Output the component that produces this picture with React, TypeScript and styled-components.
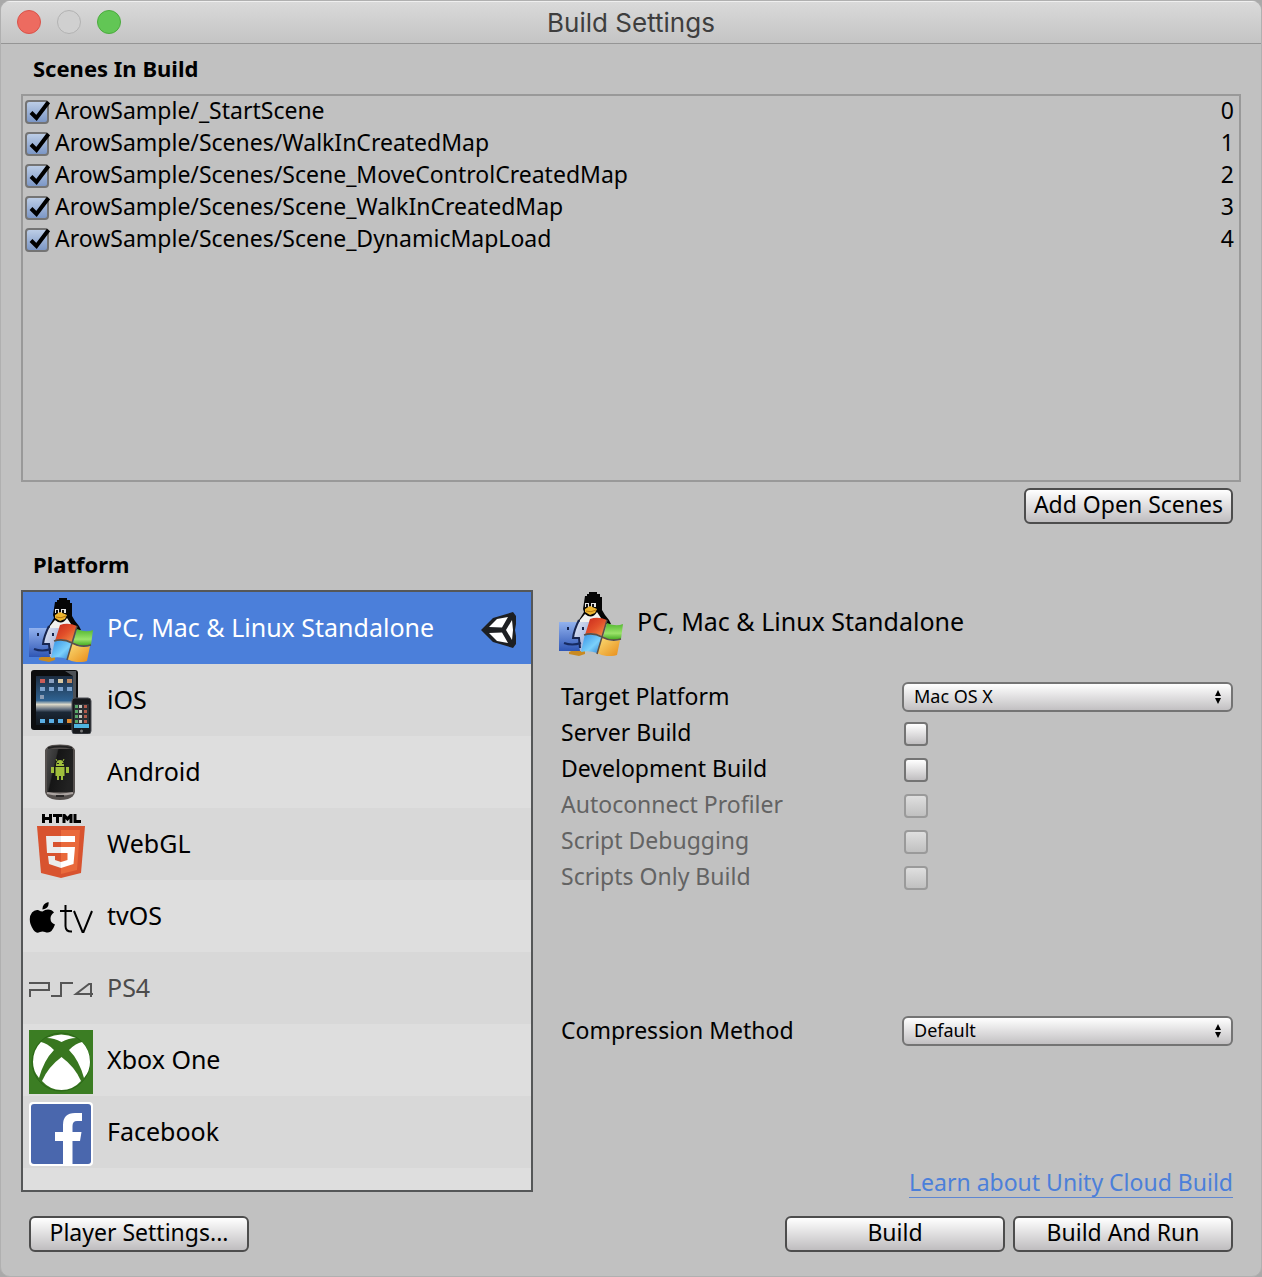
import React from "react";
import styled, { createGlobalStyle, css } from "styled-components";

const GlobalStyle = createGlobalStyle`
  *, *::before, *::after { box-sizing: border-box; }
  html { background: #a9a9a9; }
  body {
    margin: 0;
    font-family: "Noto Sans", "Open Sans", sans-serif;
    font-size: 23px;
    line-height: 32px;
    color: #000;
  }
  button, select, input { font: inherit; color: inherit; margin: 0; }
`;

const Window = styled.div`
  display: flex;
  flex-direction: column;
  min-height: 100vh;
  background: #c1c1c1;
  border: 1px solid #b0b0b0;
  border-radius: 10px;
  overflow: hidden;
`;

const TitleBar = styled.header`
  display: grid;
  grid-template-columns: 1fr auto 1fr;
  align-items: center;
  height: 43px;
  padding: 0 16px;
  background: linear-gradient(#dadada, #c4c4c4);
  border-bottom: 1px solid #959595;
  box-shadow: inset 0 1px #efefef;
`;

const TrafficLights = styled.div`
  display: flex;
  gap: 16px;
`;

const Light = styled.button<{ $fill: string; $edge: string }>`
  width: 24px;
  height: 24px;
  padding: 0;
  border: 1px solid ${(p) => p.$edge};
  border-radius: 50%;
  background: ${(p) => p.$fill};
`;

const WindowTitle = styled.h1`
  margin: 0;
  padding-top: 2px;
  font: 400 26px/32px Inter, Roboto, sans-serif;
  color: #3e3e3e;
`;

const Content = styled.main`
  display: flex;
  flex-direction: column;
  flex: 1;
  padding: 8px 20px 24px;
`;

const SectionTitle = styled.h2`
  margin: 0;
  padding: 0 12px;
  font-size: 22px;
  line-height: 32px;
  font-weight: 700;
`;

const SceneList = styled.ul`
  list-style: none;
  height: 388px;
  margin: 10px 0 6px;
  padding: 0 5px 0 2px;
  border: 2px solid #999;
`;

const SceneRow = styled.li`
  display: flex;
  justify-content: space-between;
  line-height: 28px;
  height: 32px;
`;

const SceneLabel = styled.label`
  display: flex;
  gap: 6px;
`;

const SceneCheck = styled.span`
  padding-top: 4px;
`;

const CheckBoxFrame = styled.span`
  position: relative;
  display: flex;
  width: 24px;
  height: 24px;
`;

const CheckMark = styled.svg`
  position: absolute;
  inset: 0;
  overflow: visible;
  pointer-events: none;
`;

const CheckBoxInput = styled.input`
  appearance: none;
  width: 24px;
  height: 24px;
  border: 2px solid #747474;
  border-radius: 4px;
  background: linear-gradient(#fff, #c0bec0);
  &:checked { background: linear-gradient(#bccde6, #7c97c6); }
  &:disabled { border-color: #9a9a9a; background: linear-gradient(#dfdfdf, #c0c0c0); }
`;

const PushButton = styled.button<{ $wide?: boolean }>`
  height: 36px;
  padding: 0 8px 4px;
  border: 2px solid #4d4d4d;
  border-radius: 6px;
  background: linear-gradient(#fff, #bfbdbf);
  line-height: 28px;
  ${(p) => p.$wide && css`width: 220px;`}
`;

const ButtonRow = styled.div<{ $align: string }>`
  display: flex;
  gap: 8px;
  padding: 0 8px;
  justify-content: ${(p) => p.$align};
`;

const PlatformArea = styled.section`
  display: grid;
  grid-template-columns: 512px minmax(0, 1fr);
  gap: 26px;
  margin: 10px 0 24px;
`;

const PlatformHeading = styled(SectionTitle)`
  margin-top: 24px;
`;

const PlatformList = styled.ul`
  list-style: none;
  height: 602px;
  margin: 0;
  padding: 0;
  border: 2px solid #555758;
  background: #dedede;
`;

const PlatformRow = styled.li<{ $active?: boolean }>`
  display: flex;
  height: 72px;
  background: #dedede;
  &:nth-child(even) { background: #d8d8d8; }
  ${(p) => p.$active && css`background: #4b7fda; color: #fff;`}
`;

const PlatformButton = styled.button<{ $dim?: boolean }>`
  display: flex;
  align-items: center;
  gap: 14px;
  flex: 1;
  padding: 4px 12px 0 6px;
  border: 0;
  background: none;
  text-align: left;
  font-size: 25px;
  ${(p) => p.$dim && css`color: #4c4c4c;`}
`;

const PlatformName = styled.span`
  flex: 1;
  padding-bottom: 6px;
`;

const Details = styled.div`
  display: flex;
  flex-direction: column;
  padding: 2px 8px 0 0;
`;

const DetailsHeader = styled.div`
  display: flex;
  align-items: center;
  gap: 14px;
  margin-bottom: 23px;
`;

const DetailsTitle = styled.h3`
  margin: 0;
  padding-bottom: 6px;
  font-size: 25px;
  line-height: 32px;
  font-weight: 400;
`;

const Field = styled.div<{ $dim?: boolean; $gapBefore?: boolean }>`
  display: grid;
  grid-template-columns: 341px minmax(0, 1fr);
  align-items: center;
  height: 36px;
  padding-left: 2px;
  ${(p) => p.$dim && css`color: #636363;`}
  ${(p) => p.$gapBefore && css`margin-top: 118px;`}
`;

const FieldLabel = styled.label`
  padding-bottom: 2px;
`;

const FieldCheck = styled.span`
  display: flex;
  padding: 2px 0 0 2px;
`;

const SelectFrame = styled.span`
  position: relative;
  display: flex;
`;

const SelectBox = styled.select`
  appearance: none;
  width: 100%;
  height: 30px;
  padding: 0 32px 2px 10px;
  border: 2px solid #747474;
  border-radius: 6px;
  background: linear-gradient(#fff, #c2c0c2);
  font-size: 18px;
  line-height: 24px;
`;

const SelectArrows = styled.svg`
  position: absolute;
  right: 12px;
  top: 8px;
  pointer-events: none;
`;

const LearnLink = styled.a`
  margin-top: auto;
  margin-bottom: -6px;
  align-self: flex-end;
  border-bottom: 1px solid #5f87d2;
  color: #4b7fda;
  line-height: 30px;
  text-decoration: none;
`;

const Spread = styled.div`
  display: flex;
  justify-content: space-between;
`;

function CheckBox({ id, checked, disabled }: { id: string; checked?: boolean; disabled?: boolean }) {
  return (
    <CheckBoxFrame>
      <CheckBoxInput id={id} type="checkbox" defaultChecked={checked} disabled={disabled} />
      {checked && (
        <CheckMark width="24" height="24" viewBox="0 0 24 24" aria-hidden="true">
          <path d="M6 12.500 L11.500 18 L23.500 2" fill="none" stroke="#000" strokeWidth="4" />
        </CheckMark>
      )}
    </CheckBoxFrame>
  );
}

function Icon({ children }: { children: React.ReactNode }) {
  return <svg width="64" height="64" viewBox="0 0 64 64" aria-hidden="true">{children}</svg>;
}

function StandaloneIcon({ id }: { id: string }) {
  return (
    <Icon>
      <defs>
        <linearGradient id={id + "m"} x2="0" y2="1"><stop stopColor="#92b2ee" /><stop offset="1" stopColor="#2f56b5" /></linearGradient>
        <linearGradient id={id + "f"} x2="1" y2="1"><stop stopColor="#e4e8f4" /><stop offset="1" stopColor="#8fa4d6" /></linearGradient>
        <linearGradient id={id + "r"} x2="1" y2="1"><stop stopColor="#c8281c" /><stop offset=".5" stopColor="#e2502a" /><stop offset="1" stopColor="#f39a4c" /></linearGradient>
        <linearGradient id={id + "g"} x2="0" y2="1"><stop stopColor="#4fb52e" /><stop offset=".6" stopColor="#9be36a" /><stop offset="1" stopColor="#3da61c" /></linearGradient>
        <linearGradient id={id + "b"} x2="1" y2="1"><stop stopColor="#2f8de4" /><stop offset=".6" stopColor="#7bd0fb" /><stop offset="1" stopColor="#2f7fd0" /></linearGradient>
        <linearGradient id={id + "y"} x2="1" y2="1"><stop stopColor="#fbe07a" /><stop offset="1" stopColor="#e88c18" /></linearGradient>
      </defs>
      <path d="M26 4 H28 V2 H30 V0 H38 V2 H41 V5 H43 V18 L46 23 L50 28 L52 32 H20 V28 L25 20 L24 17 Z" fill="#050505" />
      <path d="M26 22 Q33 28 38 20 L42 26 L40 35 H19 L21 28 Z" fill="#f1f1ef" />
      <path d="M26 11 H30 V15 H26 Z M32 11 H37 V15 H32 Z" fill="#e4e4e4" />
      <path d="M27 12 H29 V15 H27 Z M33 12 H35 V15 H33 Z" fill="#111" />
      <path d="M26 17 L31 14 L38 17 L36 21 L31 23 L26 20 Z" fill="#edb52f" />
      <path d="M27 19 Q32 21 37 18" stroke="#b87812" fill="none" />
      <path d="M10 60 L17 57 L26 58 V62 L20 64 L10 62 Z" fill="#c98a22" />
      <path d="M0 30 H19 Q15 38 14 46 H20 L21 59 H0 Z" fill={"url(#" + id + "m)"} />
      <path d="M19 30 H30 L25 59 H21 L20 46 H14 Q15 37 19 30 Z" fill={"url(#" + id + "f)"} />
      <path d="M20 28 Q15 38 14 46 H20 L21 56" fill="none" stroke="#17254f" strokeWidth="2" />
      <path d="M9 35 V38 M24 35 V38" stroke="#13224a" strokeWidth="2" />
      <path d="M5 51 Q13 54 22 51" stroke="#172b61" fill="none" strokeWidth="2" />
      <path d="M31 27 Q39 24 48 28 L43 44 Q34 40 26 43 Z" fill={"url(#" + id + "r)"} />
      <path d="M48 31 Q57 35 64 32 L62 47 Q53 50 44 45 Z" fill={"url(#" + id + "g)"} />
      <path d="M26 42 Q35 40 43 45 L38 61 Q30 58 22 60 Z" fill={"url(#" + id + "b)"} />
      <path d="M43 45 Q52 51 61 48 L58 63 Q47 66 38 61 Z" fill={"url(#" + id + "y)"} />
      <path d="M48 28 L38 62 M25 43 Q34 40 43 45 Q52 50 62 47" stroke="#5c5046" fill="none" strokeWidth="1.500" />
    </Icon>
  );
}

const APP_COLORS = ["#c95c58", "#8aa0c0", "#d9c9a4", "#bd8862"];

function IosIcon() {
  return (
    <Icon>
      <defs>
        <linearGradient id="ipad" x2="0" y2="1">
          <stop stopColor="#1c2c40" /><stop offset=".5" stopColor="#2f6291" /><stop offset=".58" stopColor="#dcd8c8" />
          <stop offset=".68" stopColor="#5f6c7c" /><stop offset=".74" stopColor="#1c2836" /><stop offset="1" stopColor="#101820" />
        </linearGradient>
      </defs>
      <rect x="2" y="0" width="47" height="60" rx="3" fill="#0c0d0f" />
      <path d="M36 1 H47 V28 H44 V6 Z" fill="#4d5156" />
      <rect x="7" y="6" width="37" height="49" fill="url(#ipad)" />
      {[0, 1, 2, 3].map((c) => (
        <g key={c}>
          <rect x={11 + c * 9} y="9" width="5" height="4" fill={APP_COLORS[c]} />
          <rect x={11 + c * 9} y="17" width="5" height="4" fill="#7da2cc" />
          <rect x={11 + c * 9} y="49" width="5" height="4" fill={c === 3 ? "#e08a30" : "#5aaee4"} />
        </g>
      ))}
      <rect x="11" y="25" width="4" height="4" fill="#8b9cb4" />
      <rect x="43" y="28" width="19" height="36" rx="3" fill="#17191c" stroke="#4c4f54" />
      <rect x="45" y="34" width="15" height="24" fill="#2b2f33" />
      {[0, 1, 2, 3].map((r) => (
        <g key={r}>
          <rect x="46" y={35 + r * 5} width="3" height="3" fill="#58a868" />
          <rect x="50" y={35 + r * 5} width="3" height="3" fill="#c4c4bc" />
          <rect x="55" y={35 + r * 5} width="3" height="3" fill="#b05b4c" />
        </g>
      ))}
      <path d="M45 54 H60 V58 H45 Z" fill="#4fb4df" />
      <circle cx="52.5" cy="61" r="1.5" fill="#777" />
    </Icon>
  );
}

function AndroidIcon() {
  return (
    <Icon>
      <defs><linearGradient id="phone" x2="1" y2=".4"><stop stopColor="#4a4a4a" /><stop offset=".35" stopColor="#343434" /><stop offset=".4" stopColor="#151515" /><stop offset="1" stopColor="#222" /></linearGradient></defs>
      <path d="M16 8 Q18 4 23 3 Q31 2 39 3 Q44 4 46 8 V50 Q45 55 39 57 Q31 59 23 57 Q17 55 16 50 Z" fill="#55504e" />
      <path d="M18 7 H44 V50 H18 Z" fill="url(#phone)" />
      <path d="M19 6 Q31 3 43 6" stroke="#222" strokeWidth="2" fill="none" />
      <path d="M18 51 Q31 54 44 51" stroke="#aaa3a0" strokeWidth="2" fill="none" />
      <path d="M27 54 H35" stroke="#282626" strokeWidth="2" />
      <g fill="#9fbd3c">
        <path d="M27 24 Q27 18 31 18 Q35 18 35 24 Z M26.500 25 H35.500 V34 H34 V38 H32 V34 H30 V38 H28 V34 H26.500 Z" />
        <path d="M22 25 H25 V31 H22 Z M37 25 H40 V31 H37 Z" />
        <path d="M27 17 L28 19 M35 17 L34 19" stroke="#9fbd3c" />
      </g>
      <path d="M28 21 H30 V22 H28 Z M33 21 H35 V22 H33 Z" fill="#202020" />
    </Icon>
  );
}

function Html5Icon() {
  return (
    <Icon>
      <path d="M14.500 0 V9 M21.500 0 V9 M14 4.500 H22 M24 1.500 H33 M28.500 0 V9 M35 9 V1 L38.500 5 L42 1 V9 M46 0 V7.500 H52" stroke="#000" strokeWidth="3" fill="none" />
      <path d="M8 12 H56 L52 59 L32 64 L12 59 Z" fill="#d8532f" />
      <path d="M32 16 H51 L48 56 L32 60 Z" fill="#e9693b" />
      <path d="M17 22 H32 V28 H24 V33 H32 V39 H18 Z M19 42 H26 V46 L32 48 V54 L20 50 Z" fill="#ebebeb" />
      <path d="M32 22 H46 V28 H32 Z M32 33 H46 L44.500 50 L32 54 V48 L38.500 46 V39 H32 Z" fill="#fff" />
    </Icon>
  );
}

function TvIcon() {
  return (
    <Icon>
      <path d="M13.500 23.500 Q13 18 19.500 16 Q20.500 22 13.500 23.500 Z M13.500 25.500 Q16 23.500 19 23.500 Q23 23.500 25 26.500 Q21.500 29 21.500 32.500 Q21.500 37 26 38.500 Q23 46.500 19 46.500 Q17 46.500 16 46 Q13.500 45 11 46 Q9 47 7.500 46.500 Q4 45 1.500 38 Q-0.500 31 3 26.500 Q5.500 23.500 9 24 Q12 25.500 13.500 25.500 Z" fill="#000" />
      <path d="M31 25 H43 M36.500 19 V40 Q36.500 46 43 45.500 M45 25 L53.500 46 H54.500 L63 25" fill="none" stroke="#000" strokeWidth="2" />
    </Icon>
  );
}

function Ps4Icon() {
  return (
    <Icon>
      <path d="M0 25 H20 V32 H1 V39" fill="none" stroke="#555" strokeWidth="2" />
      <path d="M22 38 H32 V25 H44" fill="none" stroke="#555" strokeWidth="2" />
      <path d="M64 36 H47 L60 26 H62 V39" fill="none" stroke="#555" strokeWidth="2" />
    </Icon>
  );
}

function XboxIcon() {
  return (
    <Icon>
      <path d="M0 0 H64 V64 H0 Z" fill="#3b7d23" />
      <circle cx="32" cy="32" r="29" fill="#38761f" stroke="#2b6818" />
      <g fill="#fff">
        <path d="M18 8 Q32 1 47 8 Q40 8 32.500 12 Q25 8 18 8 Z" />
        <path d="M12 12 Q18 13 25 20 Q15 30 10 48 Q4 41 4 32 Q4 20 12 12 Z" />
        <path d="M53 12 Q47 13 40 20 Q50 30 55 48 Q61 41 61 32 Q61 20 53 12 Z" />
        <path d="M32.500 27 Q46 37 52 51 Q44 60 32.500 60 Q21 60 13 51 Q19 37 32.500 27 Z" />
      </g>
    </Icon>
  );
}

function FacebookIcon() {
  return (
    <Icon>
      <rect width="64" height="64" rx="4" fill="#fff" />
      <rect x="2" y="2" width="60" height="60" rx="3" fill="#4a67ad" />
      <path d="M34 62 V39 H26 V30 H34 V23 Q34 11 46 11 H53 V19 H48 Q43.500 19 43.500 24 V30 H52.500 L51 39 H43.500 V62 Z" fill="#fff" />
    </Icon>
  );
}

function UnityMark() {
  return (
    <svg width="38" height="38" viewBox="0 0 38 38" aria-label="Current platform">
      <path d="M0 19 L12 7 L32 1 L35 5 V13 L34 19 L35 25 V33 L32 37 L12 31 Z" fill="#1d1f22" />
      <path d="M8 16 L16 8 L27 6 L21 16.500 Z M8 22 L16 30 L27 32 L21 21.500 Z M25 19 L31 9 L32 19 L31 29 Z" fill="#fff" />
    </svg>
  );
}

const SCENES = [
  "ArowSample/_StartScene",
  "ArowSample/Scenes/WalkInCreatedMap",
  "ArowSample/Scenes/Scene_MoveControlCreatedMap",
  "ArowSample/Scenes/Scene_WalkInCreatedMap",
  "ArowSample/Scenes/Scene_DynamicMapLoad",
];

const PLATFORMS = [
  { name: "PC, Mac & Linux Standalone", icon: <StandaloneIcon id="list" />, active: true },
  { name: "iOS", icon: <IosIcon /> },
  { name: "Android", icon: <AndroidIcon /> },
  { name: "WebGL", icon: <Html5Icon /> },
  { name: "tvOS", icon: <TvIcon /> },
  { name: "PS4", icon: <Ps4Icon />, dim: true },
  { name: "Xbox One", icon: <XboxIcon /> },
  { name: "Facebook", icon: <FacebookIcon /> },
];

const OPTIONS = [
  { id: "server", label: "Server Build" },
  { id: "development", label: "Development Build" },
  { id: "profiler", label: "Autoconnect Profiler", disabled: true },
  { id: "debugging", label: "Script Debugging", disabled: true },
  { id: "scripts", label: "Scripts Only Build", disabled: true },
];

function DropDown({ id, options }: { id: string; options: string[] }) {
  return (
    <SelectFrame>
      <SelectBox id={id} defaultValue={options[0]}>
        {options.map((o) => <option key={o}>{o}</option>)}
      </SelectBox>
      <SelectArrows width="6" height="14" viewBox="0 0 6 14" aria-hidden="true">
        <path d="M0 6 L3 0 L6 6 Z M0 8 H6 L3 14 Z" fill="#000" />
      </SelectArrows>
    </SelectFrame>
  );
}

export default function App() {
  return (
    <>
      <GlobalStyle />
      <Window>
        <TitleBar>
          <TrafficLights>
            <Light aria-label="Close" $fill="#ed6b60" $edge="#d9534a" />
            <Light aria-label="Minimize" $fill="#d0d0d0" $edge="#b2b2b2" />
            <Light aria-label="Zoom" $fill="#62c655" $edge="#4bab3e" />
          </TrafficLights>
          <WindowTitle>Build Settings</WindowTitle>
        </TitleBar>
        <Content>
          <SectionTitle>Scenes In Build</SectionTitle>
          <SceneList>
            {SCENES.map((scene, i) => (
              <SceneRow key={scene}>
                <SceneLabel htmlFor={"scene" + i}>
                  <SceneCheck><CheckBox id={"scene" + i} checked /></SceneCheck>
                  {scene}
                </SceneLabel>
                <span>{i}</span>
              </SceneRow>
            ))}
          </SceneList>
          <ButtonRow $align="flex-end">
            <PushButton>Add Open Scenes</PushButton>
          </ButtonRow>
          <PlatformHeading>Platform</PlatformHeading>
          <PlatformArea>
            <PlatformList>
              {PLATFORMS.map((p) => (
                <PlatformRow key={p.name} $active={p.active}>
                  <PlatformButton $dim={p.dim}>
                    {p.icon}
                    <PlatformName>{p.name}</PlatformName>
                    {p.active && <UnityMark />}
                  </PlatformButton>
                </PlatformRow>
              ))}
            </PlatformList>
            <Details>
              <DetailsHeader>
                <StandaloneIcon id="head" />
                <DetailsTitle>PC, Mac & Linux Standalone</DetailsTitle>
              </DetailsHeader>
              <Field>
                <FieldLabel htmlFor="target">Target Platform</FieldLabel>
                <DropDown id="target" options={["Mac OS X", "Windows", "Linux"]} />
              </Field>
              {OPTIONS.map((o) => (
                <Field key={o.id} $dim={o.disabled}>
                  <FieldLabel htmlFor={o.id}>{o.label}</FieldLabel>
                  <FieldCheck><CheckBox id={o.id} disabled={o.disabled} /></FieldCheck>
                </Field>
              ))}
              <Field $gapBefore>
                <FieldLabel htmlFor="compression">Compression Method</FieldLabel>
                <DropDown id="compression" options={["Default", "LZ4", "LZ4HC"]} />
              </Field>
              <LearnLink href="#cloud-build">Learn about Unity Cloud Build</LearnLink>
            </Details>
          </PlatformArea>
          <Spread>
            <ButtonRow $align="flex-start">
              <PushButton $wide>Player Settings...</PushButton>
            </ButtonRow>
            <ButtonRow $align="flex-end">
              <PushButton $wide>Build</PushButton>
              <PushButton $wide>Build And Run</PushButton>
            </ButtonRow>
          </Spread>
        </Content>
      </Window>
    </>
  );
}
